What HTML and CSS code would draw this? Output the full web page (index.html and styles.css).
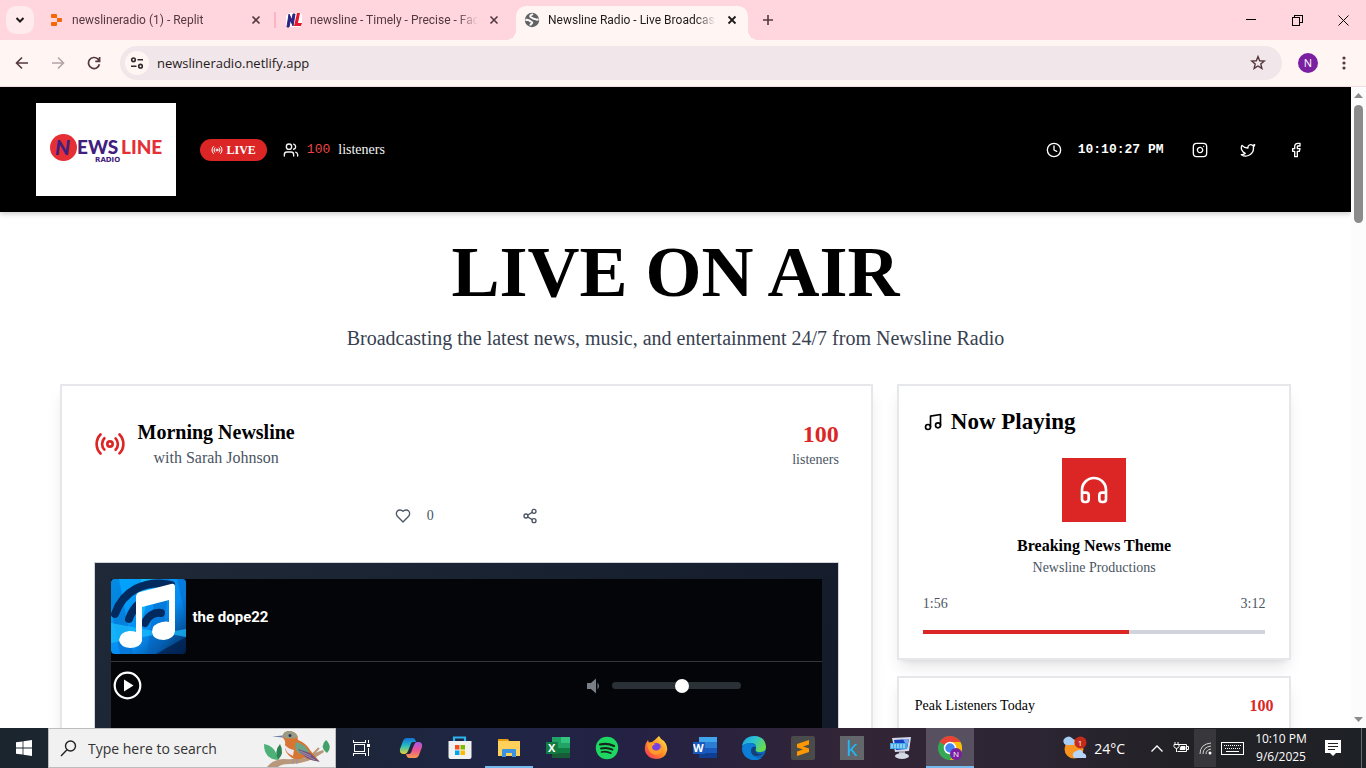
FILE: index.html
```html
<!DOCTYPE html>
<html lang="en">
<head>
<meta charset="utf-8">
<title>Newsline Radio - Live Broadcasting</title>
<link rel="stylesheet" href="styles.css">
</head>
<body class="desktop">
<div class="tabstrip">
  <button class="tab-search" aria-label="Search tabs"><svg width="10" height="10" viewBox="0 0 10 10" fill="none" stroke="#1f1a1b" stroke-width="2"><path d="M1.5 3l3.5 3.5L8.500 3"/></svg></button>
  <div class="tab">
    <svg class="favicon" viewBox="0 0 16 16" fill="#f76506"><path d="M4 2h4a1 1 0 0 1 1 1v3H4a1 1 0 0 1-1-1V3a1 1 0 0 1 1-1zM9 6h4a1 1 0 0 1 1 1v2a1 1 0 0 1-1 1H9zM4 10h5v3a1 1 0 0 1-1 1H4a1 1 0 0 1-1-1v-2a1 1 0 0 1 1-1z"/></svg>
    <span class="tab-title">newslineradio (1) - Replit</span>
    <button class="tab-close" aria-label="Close tab"><svg width="10" height="10" viewBox="0 0 10 10" stroke="#54383f" stroke-width="1.600"><path d="M1.500 1.500l7 7M8.500 1.500l-7 7"/></svg></button>
  </div>
  <span class="tab-divider"></span>
  <div class="tab">
    <svg class="favicon" viewBox="0 0 16 16"><path d="M3 1h12l1 3v10l-3 1H1L0 12V4z" fill="#fff"/><path d="M1 15L3 2l3 6 1-6h2L7 14 4.500 8 3 15z" fill="#2b2384" stroke="#2b2384"/><path d="M11 1h3l-2 10h4l-1 3H8z" fill="#e3192d"/></svg>
    <span class="tab-title">newsline - Timely - Precise - Factual</span>
    <button class="tab-close" aria-label="Close tab"><svg width="10" height="10" viewBox="0 0 10 10" stroke="#54383f" stroke-width="1.600"><path d="M1.500 1.500l7 7M8.500 1.500l-7 7"/></svg></button>
  </div>
  <span class="tab-space"></span>
  <div class="tab tab-active">
    <svg class="favicon" viewBox="0 0 16 16"><circle cx="8" cy="8" r="7.200" fill="#5f6368"/><path d="M9 2c-1 .8-3.200 1-2.800 2.500.4 1.400 2 .8 2.600 1.800.5 1 2.200.4 3 1 .8.600 2 .3 2.700-.1M1.500 7.500c1.500.8 3.700.2 4.500 1.400.6 1 2.500.4 2.200 1.900-.3 1-1.700 1.200-1.900 2.700" fill="none" stroke="#fff6f4" stroke-width="2"/></svg>
    <span class="tab-title">Newsline Radio - Live Broadcasting</span>
    <button class="tab-close" aria-label="Close tab"><svg width="10" height="10" viewBox="0 0 10 10" stroke="#1f1a1b" stroke-width="1.800"><path d="M1.500 1.500l7 7M8.500 1.500l-7 7"/></svg></button>
  </div>
  <button class="new-tab" aria-label="New tab"><svg width="12" height="12" viewBox="0 0 12 12" stroke="#54383f" stroke-width="1.600"><path d="M6 1v10M1 6h10"/></svg></button>
  <div class="window-controls">
    <button class="window-button" aria-label="Minimize"><svg width="10" height="10" stroke="#000" shape-rendering="crispEdges"><path d="M0 4.500h10"/></svg></button>
    <button class="window-button" aria-label="Restore"><svg width="11" height="11" fill="none" stroke="#000" shape-rendering="crispEdges"><path d="M.5 2.500h7v8h-7zM2.500 2.500v-2h8v7h-3"/></svg></button>
    <button class="window-button" aria-label="Close"><svg width="11" height="11" stroke="#000"><path d="M.5.500l10 10M10.500.500l-10 10"/></svg></button>
  </div>
</div>

<div class="toolbar">
  <button class="tool" aria-label="Back"><svg width="14" height="14" viewBox="0 0 14 14" fill="none" stroke="#54383f" stroke-width="1.600"><path d="M13 7H1.500M7 1.500L1.500 7 7 12.500"/></svg></button>
  <button class="tool" aria-label="Forward"><svg width="14" height="14" viewBox="0 0 14 14" fill="none" stroke="#b3a3a6" stroke-width="1.600"><path d="M1 7h11.500M7 1.500L12.500 7 7 12.500"/></svg></button>
  <button class="tool" aria-label="Reload"><svg width="14" height="14" viewBox="0 0 14 14" fill="none" stroke="#54383f" stroke-width="1.700"><path d="M12.400 8.200A5.500 5.500 0 1 1 11 3.200L12.500 5M12.600 1v4.300H8.300"/></svg></button>
  <div class="omnibox">
    <button class="site-info" aria-label="Site information"><svg width="14" height="12" viewBox="0 0 14 12" fill="none" stroke="#30282a" stroke-width="1.600"><circle cx="3.500" cy="2.800" r="1.800"/><path d="M7.500 2.800H13M1 9.200h5.500"/><circle cx="10.500" cy="9.200" r="1.800"/></svg></button>
    <input class="address" type="text" aria-label="Address" value="newslineradio.netlify.app">
    <button class="bookmark" aria-label="Bookmark"><svg width="16" height="16" viewBox="0 0 16 16" fill="none" stroke="#54383f" stroke-width="1.400"><path d="M8 1.600l1.700 4.200 4.600.3-3.500 2.900 1.100 4.400L8 11l-3.900 2.400 1.100-4.400L1.700 6.100l4.600-.3z"/></svg></button>
  </div>
  <button class="avatar" aria-label="Profile">N</button>
  <button class="tool" aria-label="Menu"><svg width="4" height="14" fill="#54383f"><circle cx="2" cy="2" r="1.600"/><circle cx="2" cy="7" r="1.600"/><circle cx="2" cy="12" r="1.600"/></svg></button>
</div>

<div class="viewport">
  <div class="page">
    <header class="site-header">
      <div class="header-inner">
        <a class="logo" href="#" aria-label="Newsline Radio">
          <svg width="140" height="93" viewBox="0 0 140 93">
            <circle cx="27.500" cy="44.500" r="13.500" fill="#e62f35"/>
            <text class="logo-initial" x="19" y="52" fill="#40207c">N</text>
            <text class="logo-name" x="41" y="51" fill="#40207c">EWS</text>
            <text class="logo-name" x="85" y="51" fill="#e62f35">LINE</text>
            <text class="logo-tag" x="59" y="59" fill="#40207c">RADIO</text>
          </svg>
        </a>
        <span class="live-badge"><svg class="icon" width="12" height="12" viewBox="0 0 24 24"><path d="M4.900 19.100C1 15.200 1 8.800 4.900 4.900M7.800 16.200c-2.300-2.300-2.300-6.100 0-8.500M16.200 7.800c2.300 2.300 2.300 6.100 0 8.500M19.100 4.900C23 8.800 23 15.100 19.100 19"/><circle cx="12" cy="12" r="2"/></svg>LIVE</span>
        <div class="audience">
          <svg class="icon" width="16" height="16" viewBox="0 0 24 24"><path d="M16 21v-2a4 4 0 0 0-4-4H6a4 4 0 0 0-4 4v2"/><circle cx="9" cy="7" r="4"/><path d="M22 21v-2a4 4 0 0 0-3-3.870M16 3.130a4 4 0 0 1 0 7.750"/></svg>
          <span class="audience-count">100</span><span>listeners</span>
        </div>
        <div class="clock"><svg class="icon" width="16" height="16" viewBox="0 0 24 24"><circle cx="12" cy="12" r="10"/><path d="M12 6v6l4 2"/></svg><time>10:10:27 PM</time></div>
        <nav class="social">
          <a href="#" aria-label="Instagram"><svg class="icon" width="16" height="16" viewBox="0 0 24 24"><rect x="2" y="2" width="20" height="20" rx="5"/><path d="M16 11.370A4 4 0 1 1 12.630 8 4 4 0 0 1 16 11.370zM17.500 6.500h.01"/></svg></a>
          <a href="#" aria-label="Twitter"><svg class="icon" width="16" height="16" viewBox="0 0 24 24"><path d="M22 4s-.7 2.100-2 3.400c1.600 10-9.400 17.300-18 11.600 2.200.1 4.400-.6 6-2C3 15.500.5 9.600 3 5c2.200 2.600 5.600 4.100 9 4-.9-4.200 4-6.600 7-3.800 1.100 0 3-1.200 3-1.200z"/></svg></a>
          <a href="#" aria-label="Facebook"><svg class="icon" width="16" height="16" viewBox="0 0 24 24"><path d="M18 2h-3a5 5 0 0 0-5 5v3H7v4h3v8h4v-8h3l1-4h-4V7a1 1 0 0 1 1-1h3z"/></svg></a>
        </nav>
      </div>
    </header>

    <main class="main">
      <h1 class="hero-title">LIVE ON AIR</h1>
      <p class="hero-text">Broadcasting the latest news, music, and entertainment 24/7 from Newsline Radio</p>
      <div class="columns">
        <section class="card show">
          <div class="show-head">
            <svg class="icon show-icon" width="32" height="32" viewBox="0 0 24 24"><path d="M4.900 19.100C1 15.200 1 8.800 4.900 4.900M7.800 16.200c-2.300-2.300-2.300-6.100 0-8.500M16.200 7.800c2.300 2.300 2.300 6.100 0 8.500M19.100 4.900C23 8.800 23 15.100 19.100 19"/><circle cx="12" cy="12" r="2"/></svg>
            <div class="show-name"><h2>Morning Newsline</h2><p>with Sarah Johnson</p></div>
            <div class="show-stat"><strong>100</strong><span>listeners</span></div>
          </div>
          <div class="actions">
            <button class="action"><svg class="icon" width="16" height="16" viewBox="0 0 24 24"><path d="M19 14c1.490-1.460 3-3.210 3-5.500A5.500 5.500 0 0 0 16.500 3c-1.760 0-3 .5-4.500 2-1.500-1.500-2.740-2-4.500-2A5.500 5.500 0 0 0 2 8.500c0 2.300 1.500 4.050 3 5.500l7 7Z"/></svg><span>0</span></button>
            <button class="action" aria-label="Share"><svg class="icon" width="16" height="16" viewBox="0 0 24 24"><circle cx="18" cy="5" r="3"/><circle cx="6" cy="12" r="3"/><circle cx="18" cy="19" r="3"/><path d="M8.590 13.510l6.830 3.980M15.410 6.510l-6.820 3.980"/></svg></button>
          </div>
          <div class="player">
            <div class="player-body">
              <div class="track">
                <svg class="cover" width="75" height="75" viewBox="0 0 75 75">
                  <defs><linearGradient id="sky" x1="0" y1="0" x2="1" y2="1"><stop offset="0" stop-color="#00a8ff"/><stop offset=".6" stop-color="#078af0"/><stop offset="1" stop-color="#022658"/></linearGradient></defs>
                  <path fill="url(#sky)" d="M0 0h75v75H0z"/>
                  <path d="M8 0l14 75H9L0 30V0zM46 0h12l-8 75H36zM66 0h9v40z" fill="#0560b8" opacity=".4"/>
                  <path d="M30 0h12L26 60zM0 44l75 14v-8l-75 14z" fill="#19c0ff" opacity=".7"/>
                  <g fill="none" stroke="#032a5e" stroke-width="8" stroke-linecap="round"><path d="M4 35C12 12 34 0 60 6"/><path d="M18 40c5-14 16-23 32-23"/><path d="M34 44c3-7 9-11 16-10"/></g>
                  <path d="M75 58v17H45z" fill="#021d46" opacity=".7"/>
                  <path d="M25 18q0-4 4-5l31-8q4-1 4 3v44q-1 8-11 9-11 0-12-8 0-8 10-10 5-1 7 0V21l-27 7v34q-2 7-12 7-10-1-11-8 1-8 10-9 5 0 7 1z" fill="#fff"/>
                </svg>
                <span>the dope22</span>
              </div>
              <div class="controls">
                <button class="play" aria-label="Play"><svg width="29" height="29" viewBox="0 0 29 29"><circle cx="14.500" cy="14.500" r="12.800" fill="none" stroke="#fff" stroke-width="2.200"/><path d="M11 8.500l9.500 6-9.500 6z" fill="#fff"/></svg></button>
                <svg class="speaker" width="14" height="16" viewBox="0 0 14 16" fill="#777e86"><path d="M0 5h4l5-4.500v15L4 11H0zM10.500 4.500q3 3.500 0 7z"/></svg>
                <input class="volume" type="range" min="0" max="100" value="55" aria-label="Volume">
              </div>
            </div>
          </div>
        </section>

        <aside class="side">
          <section class="card now">
            <h2 class="now-title"><svg class="icon" width="20" height="20" viewBox="0 0 24 24"><path d="M9 18V5l12-2v13"/><circle cx="6" cy="18" r="3"/><circle cx="18" cy="16" r="3"/></svg>Now Playing</h2>
            <div class="now-art"><svg class="icon" width="32" height="32" viewBox="0 0 24 24"><path d="M3 14h3a2 2 0 0 1 2 2v3a2 2 0 0 1-2 2H5a2 2 0 0 1-2-2v-7a9 9 0 0 1 18 0v7a2 2 0 0 1-2 2h-1a2 2 0 0 1-2-2v-3a2 2 0 0 1 2-2h3"/></svg></div>
            <h3 class="now-song">Breaking News Theme</h3>
            <p class="now-artist">Newsline Productions</p>
            <div class="times"><span>1:56</span><span>3:12</span></div>
            <div class="progress"><div class="progress-fill" style="width:60.3%"></div></div>
          </section>
          <section class="card peak"><span>Peak Listeners Today</span><strong>100</strong></section>
        </aside>
      </div>
    </main>
  </div>
  <div class="scrollbar">
    <svg width="9" height="5" fill="#8b8b8b"><path d="M0 5L4.500 0 9 5z"/></svg>
    <div class="scroll-track"><div class="scroll-thumb"></div></div>
    <svg width="9" height="5" fill="#8b8b8b"><path d="M0 0l4.500 5L9 0z"/></svg>
  </div>
</div>

<footer class="taskbar">
  <button class="start" aria-label="Start"><svg width="16" height="16" viewBox="0 0 16 16" fill="#fff"><path d="M0 2.300l6.600-.9v6.200H0zM7.400 1.300L16 0v7.600H7.400zM0 8.400h6.600v6.200L0 13.700zM7.400 8.400H16V16l-8.600-1.200z"/></svg></button>
  <label class="search">
    <svg width="17" height="17" viewBox="0 0 17 17" fill="none" stroke="#222" stroke-width="1.400"><circle cx="10.500" cy="6" r="5"/><path d="M7 9.800L1 16"/></svg>
    <input type="text" placeholder="Type here to search" aria-label="Search">
    <svg class="bird" width="68" height="38" viewBox="0 0 68 38">
      <path d="M4 38q5-7 16-8 16 1 26-4l14-5 1 2-11 7q-12 5-24 5-8 0-11 3z" fill="#b9977a"/><path d="M49 26l7-7" stroke="#b9977a" stroke-width="2"/>
      <path d="M15 31Q1 30 1 15q12 2 14 16z" fill="#4db077"/><path d="M15 31q-4-9 2-16 5 9-2 16z" fill="#2c8253"/><path d="M64 24q-8-6-1-13 7 7 1 13z" fill="#43a06a"/>
      <path d="M9 7.500l11-1v2z" fill="#6b7fa8"/>
      <path d="M19 8Q21 1 27 2q8 1 8 9 8 3 12 10l9 11q-9 0-14-4-7 4-13 1-8-5-7-13 1-5-3-8z" fill="#d77532"/>
      <path d="M19 8Q21 1 27 2q6 1 8 6-8 3-16 0z" fill="#9a9a86"/><path d="M21 15q1 9 9 12l1-6q-6-1-10-6z" fill="#eee6f2"/><path d="M33 13q9 2 13 10l-9 2q-7-5-4-12z" fill="#6aa58a"/>
      <path d="M35 20l12 4 10 9q-16-2-22-13z" fill="#6c5580"/><path d="M37 22l11 5M38 24l14 7" stroke="#a48aa8"/><circle cx="27" cy="6.500" r="1.500" fill="#253950"/><path d="M30 30v5M34 30v5" stroke="#9a8fa8"/>
    </svg>
  </label>
  <div class="apps">
    <button class="app" aria-label="Task view"><svg width="18" height="16" viewBox="0 0 18 16" fill="none" stroke="#fff" shape-rendering="crispEdges"><path d="M1.500 4.500h10v7h-10zM.5 0v2.500h12V0M.5 16v-2.500h12V16M15.500 0v3M15.500 8v8"/><path d="M14 4h3v3h-3z" fill="#fff" stroke="none"/></svg></button>
    <button class="app" aria-label="Copilot"><svg width="24" height="24" viewBox="0 0 24 24"><defs><linearGradient id="cp1" x2="0" y2="1"><stop stop-color="#136fd8"/><stop offset=".5" stop-color="#28bfc0"/><stop offset="1" stop-color="#e8d42f"/></linearGradient><linearGradient id="cp2" x2="0" y2="1"><stop stop-color="#a458e8"/><stop offset=".5" stop-color="#ee5392"/><stop offset="1" stop-color="#f89a4c"/></linearGradient></defs><path d="M8 2h6q2 0 3 4l-3 0q-2 0-3 4l-2 5q-1 3-3 3H5q-5 0-4-5L4 5q1-3 4-3z" fill="url(#cp1)"/><path d="M16 22h-6q-2 0-3-4l3 0q2 0 3-4l2-5q1-3 3-3h1q5 0 4 5l-3 8q-1 3-4 3z" fill="url(#cp2)"/></svg></button>
    <button class="app" aria-label="Store"><svg width="24" height="24" viewBox="0 0 24 24"><path d="M6 6V1.500h11V6" fill="none" stroke="#2db3ee" stroke-width="2.200"/><path d="M.5 5h23v16q0 2-2 2h-19q-2 0-2-2z" fill="#f1f1f1"/><path d="M7 9h4.500v4.500H7z" fill="#f25022"/><path d="M12.500 9H17v4.500h-4.500z" fill="#7fba00"/><path d="M7 14.500h4.500V19H7z" fill="#00a4ef"/><path d="M12.500 14.500H17V19h-4.500z" fill="#ffb900"/></svg></button>
    <button class="app app-open" aria-label="File Explorer"><svg width="24" height="24" viewBox="0 0 24 24"><path d="M1 3h10l2 3H1z" fill="#e59d12"/><path d="M1 5h22v15H1z" fill="#ffd05a"/><path d="M5 21v-7q0-1 1-1h12q1 0 1 1v7h-4v-4H9v4z" fill="#3b92df"/></svg></button>
    <button class="app" aria-label="Excel"><svg class="office" width="24" height="24" viewBox="0 0 24 24"><path d="M6 1h18v21H6z" fill="#21a366"/><path d="M15 1h9v6h-9z" fill="#33c481"/><path d="M6 12h18v5H6z" fill="#107c41"/><path d="M6 17h18v5H6z" fill="#185c37"/><path d="M0 6h12v12H0z" fill="#107c41"/><text x="2" y="16">X</text></svg></button>
    <button class="app" aria-label="Spotify"><svg width="24" height="24" viewBox="0 0 24 24"><circle cx="12" cy="12" r="11.200" fill="#1ed760"/><g fill="none" stroke="#17251d" stroke-linecap="round"><path d="M5 8.500q7-2 14 1.500" stroke-width="2.200"/><path d="M6 12.500q6-1.500 11.500 1.200" stroke-width="1.900"/><path d="M6.500 16q5-1.200 9.500 1.200" stroke-width="1.600"/></g></svg></button>
    <button class="app" aria-label="Firefox"><svg width="24" height="24" viewBox="0 0 24 24"><defs><linearGradient id="fx" x1="1" x2="0" y2="1"><stop stop-color="#fff44f"/><stop offset=".5" stop-color="#ff8a24"/><stop offset="1" stop-color="#f52b62"/></linearGradient></defs><path d="M15 0q2 4 5 5 4 5 3 10-2 8-11 8Q3 22 1 15 0 9 4 4l1 3 3-1q3-2 7-6z" fill="url(#fx)"/><circle cx="12.500" cy="11.500" r="4.500" fill="#7542e5"/><path d="M3 7q5-2 8 1.500-3 .5-3 3 1 3.500 5 3 4-1 4-6 4 5 0 8.500-6 4-11-1-3-4-3-9z" fill="#ff9a2b"/></svg></button>
    <button class="app" aria-label="Word"><svg class="office" width="24" height="24" viewBox="0 0 24 24"><path d="M6 1h18v21H6z" fill="#2b7cd3"/><path d="M6 1h18v5H6z" fill="#41a5ee"/><path d="M6 12h18v5H6z" fill="#185abd"/><path d="M6 17h18v5H6z" fill="#103f91"/><path d="M0 6h12v12H0z" fill="#185abd"/><text x="0" y="16">W</text></svg></button>
    <button class="app" aria-label="Edge"><svg width="24" height="24" viewBox="0 0 24 24"><defs><linearGradient id="ed" x2="1" y2=".5"><stop stop-color="#1b9de2"/><stop offset=".5" stop-color="#2cc3cf"/><stop offset="1" stop-color="#67db4e"/></linearGradient></defs><circle cx="12" cy="12" r="12" fill="#0c67bd"/><path d="M0 10Q2 0 12 0q11 0 12 11 0 5-6 5-5 0-4-3 1-6-5-6-6 0-9 3z" fill="url(#ed)"/><path d="M0 12q2-5 8-5 5 1 6 4-4-1-5 3 0 6 6 8 4 1 6-1-4 4-11 3Q0 21 0 12z" fill="#0b7fd6"/><path d="M14 11q-4-1-5 3 0 6 6 6 4 0 7-3-4 2-7 0-3-2-1-6z" fill="#143f77"/></svg></button>
    <button class="app" aria-label="Sublime Text"><svg width="24" height="24" viewBox="0 0 24 24"><rect width="24" height="24" rx="2" fill="#4b4b4b"/><path d="M6 8l12-4v4.500l-6 2 6 2V16L6 20v-4.500l6-2-6-2z" fill="#ff9800"/></svg></button>
    <button class="app" aria-label="Kodi"><span class="app-k">k</span></button>
    <button class="app" aria-label="Remote"><svg width="24" height="24" viewBox="0 0 24 24"><path d="M3 2l19-1-2 14-14 1z" fill="#d5dae6"/><path d="M5 4l15-1-2 10-11 1z" fill="#173fc4"/><path d="M14 3h6l-2 8z" fill="#7aa5ee"/><path d="M1 7h17v6H1z" fill="#42a8e8"/><path d="M2 9h15M2 11h15" stroke="#d9f1ff" stroke-dasharray="2 1"/><path d="M10 15h6v4h-6z" fill="#a5abb8"/><ellipse cx="13" cy="20" rx="7" ry="3" fill="#d5dae6"/></svg></button>
    <button class="app app-open app-current" aria-label="Chrome"><svg width="24" height="24" viewBox="0 0 24 24"><circle cx="12" cy="12" r="12" fill="#34a853"/><path d="M1.600 6A12 12 0 0 1 22.400 6L12 12z" fill="#ea4335"/><path d="M22.400 6A12 12 0 0 1 12 24l5-9-5-9z" fill="#fbbc05"/><circle cx="12" cy="12" r="5.500" fill="#4285f4" stroke="#fff" stroke-width="1.500"/><circle cx="18" cy="18" r="6" fill="#7b1fa2"/><text class="badge-letter" x="18" y="21">N</text></svg></button>
  </div>
  <div class="tray">
    <div class="weather"><svg width="25" height="24" viewBox="0 0 25 24"><circle cx="12" cy="13" r="9.500" fill="#f8941f"/><path d="M4 9a4 4 0 0 1-1-7q4-3 7 0 4 2 2 7z" fill="#a9cdf4"/><path d="M13 22q-4-2-1-6 3-1 4-2 4-1 5 3 4 1 3 5z" fill="#b7d6f7"/><circle cx="18.500" cy="6.500" r="6" fill="#c42b1c"/><text class="badge-letter" x="18" y="10">1</text></svg><span>24°C</span></div>
    <svg width="12" height="7" fill="none" stroke="#fff" stroke-width="1.300"><path d="M.5 6.500L6 1l5.500 5.500"/></svg>
    <svg width="16" height="12" viewBox="0 0 16 12" fill="none" stroke="#fff"><path d="M5.500 2.500h8v7h-9M14 4.500h1.500v3H14M2 0v2M5 0v2M1 2.500h5v2q-1 2-2.500 2T1 4.500zM3.500 6.500v3.500"/><path d="M8 4.500h4v3H7z" fill="#fff"/></svg>
    <span class="wifi"><svg width="13" height="13" viewBox="0 0 13 13" fill="none" stroke="#d3d3d3"><path d="M1 12Q1 2 12 1M4 12Q4 5 12 4M7 12q0-4 5-5"/><circle cx="11" cy="11" r="1.500" fill="#fff" stroke="none"/></svg></span>
    <svg width="23" height="13" fill="none" stroke="#fff" shape-rendering="crispEdges"><path d="M.5.500h22v12H.5zM5 9.500h13"/><path d="M3 3.500h17M4 6.500h16" stroke-dasharray="1 1"/></svg>
    <div class="datetime"><span>10:10 PM</span><span>9/6/2025</span></div>
    <svg class="notice" width="16" height="16" viewBox="0 0 16 16"><path d="M0 0h16v13h-5l-3 3-3-3H0z" fill="#fff"/><path d="M3 3.500h10M3 6.500h10M3 9.500h7" stroke="#222"/></svg>
    <span class="show-desktop"></span>
  </div>
</footer>
</body>
</html>
```
FILE: styles.css
```css
* { box-sizing: border-box; }
h1, h2, h3, p { margin: 0; }
button, input { font: inherit; color: inherit; border: 0; padding: 0; background: none; outline: 0; }
svg { flex: none; display: block; }
a { color: inherit; }
.desktop { margin: 0; height: 100vh; display: flex; flex-direction: column; overflow: hidden; font-family: "Open Sans", "Noto Sans", sans-serif; background: #fff; }
.icon { fill: none; stroke: currentColor; stroke-width: 2; stroke-linecap: round; stroke-linejoin: round; }

/* Browser tabs */
.tabstrip { flex: none; height: 40px; display: flex; align-items: center; background: #ffd6de; padding-left: 6px; font-family: Roboto, sans-serif; font-size: 12px; color: #54383f; }
.tab-search { width: 28px; height: 28px; margin-right: 6px; border-radius: 10px; background: #ffebee; display: grid; place-items: center; }
.tab { flex: 0 1 232px; min-width: 0; height: 34px; align-self: flex-end; display: flex; align-items: center; padding: 0 8px 6px 8px; }
.tab-active { background: #fff6f4; border-radius: 10px 10px 0 0; color: #1f1a1b; position: relative; }
.tab-active::before, .tab-active::after { content: ""; position: absolute; bottom: 0; width: 10px; height: 10px; }
.tab-active::before { left: -10px; background: radial-gradient(circle at 0 0, #ffd6de 10px, #fff6f4 10px); }
.tab-active::after { right: -10px; background: radial-gradient(circle at 100% 0, #ffd6de 10px, #fff6f4 10px); }
.favicon { width: 16px; height: 16px; margin-right: 8px; }
.tab-title { flex: 1; overflow: hidden; white-space: nowrap; line-height: 18px; -webkit-mask-image: linear-gradient(90deg, #000 88%, transparent); mask-image: linear-gradient(90deg, #000 88%, transparent); }
.tab-close { width: 16px; height: 16px; margin-left: 8px; display: grid; place-items: center; }
.tab-divider { width: 2px; height: 16px; margin: 0 2px; background: #ffb3c2; }
.tab-space { width: 6px; }
.new-tab { width: 28px; height: 28px; margin-left: 6px; display: grid; place-items: center; }
.window-controls { margin-left: auto; display: flex; }
.window-button { width: 46px; height: 30px; display: grid; place-items: center; }

/* Toolbar */
.toolbar { flex: none; height: 47px; display: flex; align-items: center; gap: 8px; padding: 0 8px; background: #fff6f4; border-bottom: 1px solid #f6dde1; }
.tool { width: 28px; height: 28px; display: grid; place-items: center; }
.omnibox { flex: 1; height: 34px; display: flex; align-items: center; margin-left: 4px; padding: 0 16px 0 5px; border-radius: 17px; background: #f1e6e9; }
.site-info { width: 24px; height: 24px; border-radius: 50%; background: #fff6f4; display: grid; place-items: center; }
.address { flex: 1; min-width: 0; margin-left: 8px; font-size: 13px; color: #1f1a1b; }
.avatar { width: 20px; height: 20px; margin: 0 4px 0 8px; border-radius: 50%; background: #7b1fa2; color: #fff; font-size: 11px; line-height: 20px; text-align: center; }

/* Page */
.viewport { flex: 1; min-height: 0; display: flex; background: #fff; }
.page { flex: 1; min-width: 0; overflow: hidden; font-family: "Liberation Serif", "Times New Roman", serif; color: #000; background: #fff; }
.scrollbar { width: 15px; display: flex; flex-direction: column; align-items: center; padding: 6px 0; background: #fcfcfc; }
.scroll-track { flex: 1; width: 9px; margin: 7px 0; }
.scroll-thumb { height: 19.500%; border-radius: 5px; background: #8b8b8b; }
.site-header { background: #000; color: #fff; padding: 16px 0; box-shadow: 0 2px 5px rgba(0, 0, 0, .2); }
.header-inner { max-width: 1280px; margin: 0 auto; display: flex; align-items: center; font-size: 14px; line-height: 20px; }
.logo { display: block; background: #fff; margin-right: 24px; }
.logo-name { font: 900 20px "Noto Sans", sans-serif; font: 900 19px Lato, sans-serif; }
.logo-initial { font: italic 900 21px Lato, sans-serif; }
.logo-tag { font: 700 7px "DejaVu Sans", sans-serif; }
.live-badge { display: flex; align-items: center; gap: 4px; height: 22px; padding: 0 11px; margin-right: 16px; border-radius: 11px; background: #dc2626; font-weight: 700; font-size: 12px; }
.audience { display: flex; align-items: center; gap: 8px; color: #f3f4f6; }
.audience-count { font-family: "Liberation Mono", monospace; font-size: 13px; color: #ef4444; }
.clock { margin-left: auto; margin-right: 16px; display: flex; align-items: center; gap: 16px; font-family: "Liberation Mono", monospace; font-size: 13px; font-weight: 700; }
.social { display: flex; gap: 8px; }
.social a { width: 40px; height: 40px; display: grid; place-items: center; }
.main { max-width: 1280px; margin: 0 auto; padding: 24px; }
.hero-title { font-size: 72px; line-height: 72px; text-align: center; margin-bottom: 16px; }
.hero-text { font-size: 20px; line-height: 28px; text-align: center; color: #374151; margin-bottom: 32px; }
.columns { display: grid; grid-template-columns: repeat(3, 1fr); gap: 24px; align-items: start; }
.card { background: #fff; border: 2px solid #e5e7eb; box-shadow: 0 10px 15px -3px rgba(0, 0, 0, .1), 0 4px 6px -4px rgba(0, 0, 0, .1); }
.show { grid-column: span 2; padding: 32px; }
.show-head { display: flex; align-items: center; gap: 12px; margin-bottom: 24px; }
.show-icon { color: #dc2626; }
.show-name { text-align: center; font-size: 16px; line-height: 24px; color: #4b5563; }
.show-name h2 { font-size: 20px; line-height: 28px; color: #000; }
.show-stat { margin-left: auto; display: flex; flex-direction: column; align-items: flex-end; font-size: 14px; line-height: 20px; color: #4b5563; }
.show-stat strong { font-size: 24px; line-height: 32px; color: #dc2626; }
.actions { display: flex; justify-content: center; gap: 56px; margin-bottom: 24px; color: #4b5563; font-size: 14px; }
.action { height: 44px; padding: 0 16px; display: flex; align-items: center; gap: 16px; }
.player { border: 1px solid #d1d5db; padding: 16px; background: linear-gradient(135deg, #1f2937, #111827); }
.player-body { height: 300px; overflow: hidden; background: #040508; color: #fff; font: 700 15px Roboto, sans-serif; }
.track { display: flex; align-items: center; gap: 7px; padding-bottom: 7px; border-bottom: 1px solid #35373a; }
.cover { border-radius: 4px; }
.controls { display: flex; align-items: center; padding: 9px 81px 0 2px; }
.play { margin-right: auto; }
.speaker { margin-right: 11px; }
.volume { appearance: none; -webkit-appearance: none; width: 129px; height: 7px; margin: 0; border-radius: 4px; background: #293036; }
.volume::-webkit-slider-thumb { -webkit-appearance: none; width: 14px; height: 14px; border-radius: 50%; background: #fff; }
.side { display: grid; gap: 16px; }
.now { padding: 24px; text-align: center; }
.now-title { display: flex; align-items: center; gap: 8px; font-size: 23px; line-height: 24px; margin-bottom: 24px; }
.now-art { width: 64px; height: 64px; margin: 0 auto 12px; background: #dc2626; color: #fff; display: grid; place-items: center; }
.now-song { font-size: 16px; line-height: 24px; }
.now-artist, .times { font-size: 14px; line-height: 20px; color: #4b5563; }
.times { display: flex; justify-content: space-between; margin: 16px 0; }
.progress { height: 4px; background: #d1d5db; }
.progress-fill { height: 4px; background: #dc2626; }
.peak { display: flex; justify-content: space-between; padding: 16px; font-size: 14px; line-height: 24px; }
.peak strong { font-size: 16px; color: #dc2626; }

/* Taskbar */
.taskbar { flex: none; height: 40px; display: flex; background: linear-gradient(90deg, #1b252e 0, #1d2639 25%, #1f2545 36%, #242144 46%, #322536 62%, #2d2534 75%, #222226 86%, #1e2126 100%); color: #fff; }
.start { width: 48px; display: grid; place-items: center; }
.search { width: 288px; display: flex; align-items: center; padding: 0 4px 0 11px; background: #f1f1f1; border: 1px solid #bdbdbd; color: #222; }
.search input { flex: 1; min-width: 0; margin-left: 11px; font-size: 14px; }
.search input::placeholder { color: #333; opacity: 1; }
.apps { display: flex; gap: 1px; padding-left: 2px; }
.app { width: 48px; display: grid; place-items: center; border-bottom: 2px solid transparent; border-top: 2px solid transparent; }
.app-open { border-bottom-color: #76b9ed; }
.app-current { background: #565060; border-top-color: #565060; }
.office text { font: 700 11px "Open Sans", sans-serif; fill: #fff; }
.app-k { width: 24px; height: 24px; background: #63666b; color: #1fb5f2; font-size: 22px; line-height: 22px; text-align: center; }
.badge-letter { font: 8px "Open Sans", sans-serif; fill: #fff; text-anchor: middle; }
.tray { margin-left: auto; display: flex; align-items: center; font-size: 12px; }
.weather { display: flex; align-items: center; gap: 7px; margin-right: 26px; font-size: 14px; }
.wifi { width: 22px; height: 38px; margin: 0 5px; background: #38383c; display: grid; place-items: center; }
.tray > svg + svg { margin-left: 10px; }
.datetime { width: 74px; display: grid; line-height: 18px; text-align: center; }
.tray > .notice { margin: 0 20px 0 7px; }
.show-desktop { width: 5px; height: 40px; border-left: 1px solid #66686c; }
```
